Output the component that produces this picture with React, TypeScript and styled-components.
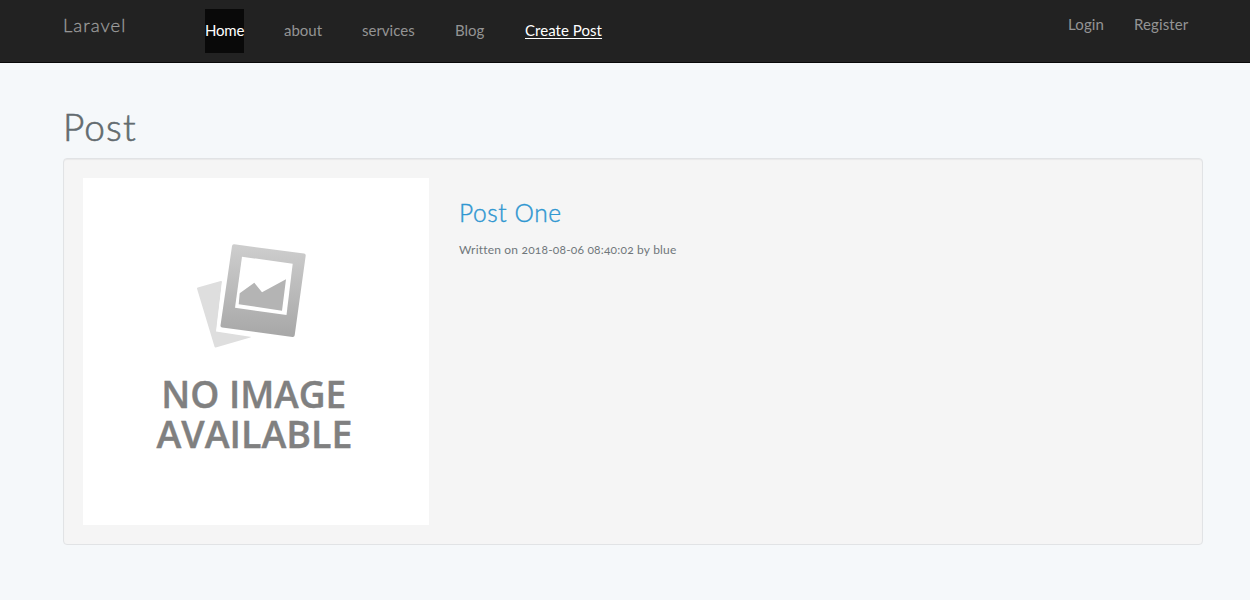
import React from "react";
import styled, { createGlobalStyle } from "styled-components";

const GlobalStyle = createGlobalStyle`
  *, *::before, *::after { box-sizing: border-box; }
  html { background: #f5f8fa; }
  body {
    margin: 0;
    background: #f5f8fa;
    color: #636b6f;
    font-family: Lato, "Open Sans", sans-serif;
    font-size: 14px;
    font-weight: 400;
    line-height: 22px;
  }
`;

const Navbar = styled.nav`
  height: 63px;
  background: #222;
  border-bottom: 1px solid #090909;
`;

const Container = styled.div`
  width: 1140px;
  margin-left: 63px;
`;

const NavInner = styled(Container)`
  display: flex;
  align-items: flex-start;
`;

const Brand = styled.a`
  width: 142px;
  padding-top: 14px;
  font-size: 18.5px;
  font-weight: 300;
  -webkit-text-stroke: 0.3px currentColor;
  letter-spacing: 1px;
  color: #9d9d9d;
  white-space: nowrap;
`;

const Menu = styled.div`
  display: flex;
  gap: 40px;
  padding-top: 9px;
`;

const MenuLink = styled.a<{ $width: number; $spacing?: number; $active?: boolean; $underlined?: boolean }>`
  width: ${(p) => p.$width}px;
  height: 44px;
  line-height: 42px;
  font-size: 15px;
  letter-spacing: ${(p) => p.$spacing ?? 0}px;
  white-space: nowrap;
  color: ${(p) => (p.$active || p.$underlined ? "#fff" : "#949494")};
  background: ${(p) => (p.$active ? "#090909" : "transparent")};
  text-decoration: ${(p) => (p.$underlined ? "underline" : "none")};
  text-decoration-thickness: 1px;
  text-underline-offset: 2px;
`;

const AuthLinks = styled.div`
  display: flex;
  gap: 30px;
  margin-left: auto;
  padding: 3px 15px 0 0;
`;

const Title = styled.h1`
  margin: 44px 0 12px;
  font-size: 37px;
  font-weight: 300;
  -webkit-text-stroke: 0.6px currentColor;
  line-height: 39px;
  letter-spacing: 1.1px;
`;

const Well = styled.section`
  display: flex;
  gap: 30px;
  height: 387px;
  padding: 19px;
  background: #f5f5f5;
  border: 1px solid #e1e3e5;
  border-radius: 4px;
  box-shadow: inset 0 1px 1px rgba(0, 0, 0, 0.05);
`;

const Placeholder = styled.svg`
  display: block;
  flex: none;
  width: 346px;
  height: 347px;
  background: #fff;
`;

const PostBody = styled.div`
  padding-top: 22px;
`;

const PostTitle = styled.h3`
  margin: 0 0 14px;
  font-size: 24.5px;
  font-weight: 300;
  -webkit-text-stroke: 0.4px currentColor;
  line-height: 26px;
  letter-spacing: 0.6px;
  color: #3097d1;
`;

const Meta = styled.small`
  display: block;
  font-size: 12px;
  line-height: 20px;
  letter-spacing: 0.19px;
  font-variant-numeric: oldstyle-nums;
  white-space: nowrap;
  color: #70777b;
`;

function NoImage() {
  return (
    <Placeholder viewBox="83 178 346 347" role="img" aria-label="No image available">
      <defs>
        <linearGradient id="photo" x1="0" y1="0" x2="0" y2="1">
          <stop offset="0" stopColor="#cdcdcd" />
          <stop offset="1" stopColor="#a8a8a8" />
        </linearGradient>
      </defs>
      <path
        d="M198 288.5 221 282l-5.500 49 34.500 5.500-34.500 10Z"
        fill="#dedede"
        stroke="#dedede"
        strokeWidth="2"
        strokeLinejoin="round"
      />
      <path d="M227 279 222 282 216 331.500 255 337.500Z" fill="#fff" />
      <path
        d="M234 246.200 303.700 255.600 292.700 335 222.500 325.500Z"
        fill="url(#photo)"
        stroke="url(#photo)"
        strokeWidth="4"
        strokeLinejoin="round"
      />
      <path d="M242 256.700 292.700 263.700 286.500 315 235 307.700Z" fill="#fff" />
      <path d="M239.700 293.300 254.300 282.700 262 292.300 286 279.300 282 310.700 238.700 304.300Z" fill="#b4b4b4" />
      <g
        fill="#808080"
        stroke="#808080"
        strokeWidth="0.4"
        fontFamily="'Open Sans', sans-serif"
        fontSize="37.500"
        fontWeight="600"
      >
        <text x="161.200" y="408" textLength="185" lengthAdjust="spacingAndGlyphs">NO IMAGE</text>
        <text x="156.500" y="448" textLength="196" lengthAdjust="spacingAndGlyphs">AVAILABLE</text>
      </g>
    </Placeholder>
  );
}

export default function App() {
  return (
    <>
      <GlobalStyle />
      <Navbar>
        <NavInner>
          <Brand>Laravel</Brand>
          <Menu>
            <MenuLink $width={39} $spacing={-0.2} $active>Home</MenuLink>
            <MenuLink $width={38}>about</MenuLink>
            <MenuLink $width={53}>services</MenuLink>
            <MenuLink $width={30}>Blog</MenuLink>
            <MenuLink $width={77} $spacing={0.05} $underlined>Create Post</MenuLink>
          </Menu>
          <AuthLinks>
            <MenuLink $width={36} $spacing={0.15}>Login</MenuLink>
            <MenuLink $width={54} $spacing={0.1}>Register</MenuLink>
          </AuthLinks>
        </NavInner>
      </Navbar>
      <Container>
        <Title>Post</Title>
        <Well>
          <NoImage />
          <PostBody>
            <PostTitle>Post One</PostTitle>
            <Meta>Written on 2018-08-06 08:40:02 by blue</Meta>
          </PostBody>
        </Well>
      </Container>
    </>
  );
}
